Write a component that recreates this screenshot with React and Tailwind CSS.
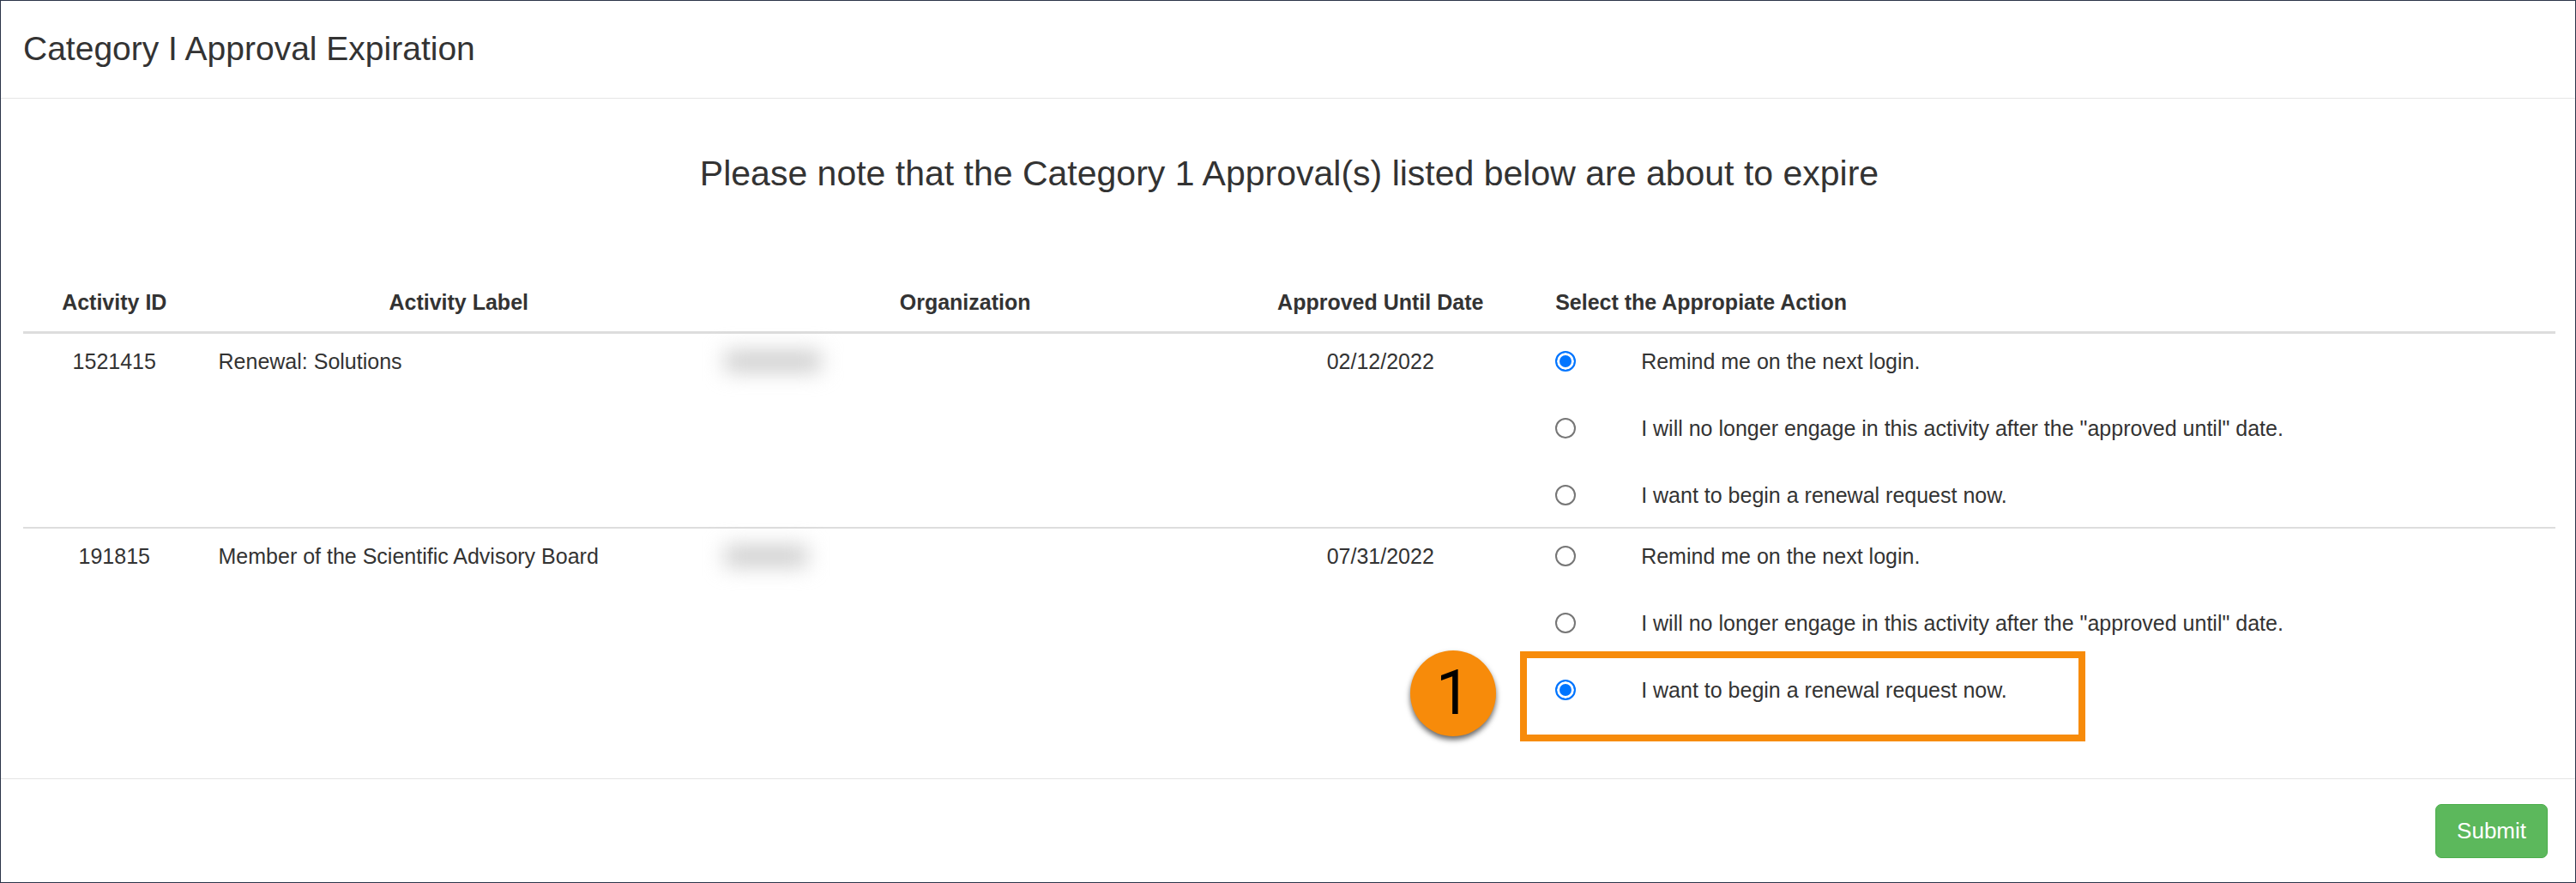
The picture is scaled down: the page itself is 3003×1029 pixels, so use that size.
import React from 'react';

const OPTIONS = [
  'Remind me on the next login.',
  'I will no longer engage in this activity after the "approved until" date.',
  'I want to begin a renewal request now.',
];

const ACTIVITIES = [
  { id: '1521415', label: 'Renewal: Solutions', until: '02/12/2022', selected: 0, mask: 'w-28' },
  { id: '191815', label: 'Member of the Scientific Advisory Board', until: '07/31/2022', selected: 2, mask: 'w-24', step: 2 },
];

function Callout() {
  return (
    <div className="pointer-events-none absolute -top-[27px] -left-[41px] h-[105px] w-[659px] border-8 border-[#f78b0a]">
      <span className="absolute -top-[9px] -left-[136px] flex size-[100px] items-center justify-center rounded-full bg-[#f78b0a] font-[Roboto,sans-serif] text-[72px] leading-none text-black shadow-[0_4px_6px_rgba(0,0,0,0.6)]">
        1
      </span>
    </div>
  );
}

function ActionOptions({ activity }) {
  return (
    <div role="radiogroup" aria-label={`Action for activity ${activity.id}`} className="flex flex-col gap-[42px]">
      {OPTIONS.map((text, i) => {
        const id = `action-${activity.id}-${i}`;
        return (
          <div key={id} className="relative flex items-center">
            <input
              type="radio"
              id={id}
              name={`action-${activity.id}`}
              defaultChecked={activity.selected === i}
              className="size-6 shrink-0 appearance-none rounded-full border-2 border-[#767676] bg-white checked:border-[#0075ff] checked:bg-[#0075ff] checked:shadow-[inset_0_0_0_3px_white]"
            />
            <label htmlFor={id} className="pl-[76px]">
              {text}
            </label>
            {activity.step === i && <Callout />}
          </div>
        );
      })}
    </div>
  );
}

export default function App() {
  return (
    <main className="border border-[#2b3549] bg-white font-['Liberation_Sans',Arial,sans-serif] text-[25px] leading-9 text-[#333]">
      <header className="border-b border-[#e5e5e5] px-[26px] pt-[27px] pb-[29px]">
        <h1 className="text-[39px] leading-[57px]">Category I Approval Expiration</h1>
      </header>

      <section className="pr-[23px] pl-[26px] pt-[57px] pb-[66px]">
        <h2 className="text-center text-[41px] leading-[60px]">
          Please note that the Category 1 Approval(s) listed below are about to expire
        </h2>

        <table className="mt-[90px] w-full table-fixed border-collapse">
          <colgroup>
            <col className="w-[7.2%]" />
            <col className="w-[20%]" />
            <col className="w-[20%]" />
            <col className="w-[12.8%]" />
            <col className="w-[40%]" />
          </colgroup>
          <thead>
            <tr className="border-b-3 border-[#ddd]">
              <th className="px-[15px] pt-[12px] pb-[16px] text-center font-bold">Activity ID</th>
              <th className="px-[15px] pt-[12px] pb-[16px] text-center font-bold">Activity Label</th>
              <th className="px-[15px] pt-[12px] pb-[16px] text-center font-bold">Organization</th>
              <th className="px-[15px] pt-[12px] pb-[16px] text-center font-bold">Approved Until Date</th>
              <th className="px-[15px] pt-[12px] pb-[16px] text-left font-bold">Select the Appropiate Action</th>
            </tr>
          </thead>
          <tbody>
            {ACTIVITIES.map((a) => (
              <tr key={a.id} className="border-b-2 border-[#ddd] align-top last:border-b-0">
                <td className="px-[15px] pt-[14px] pb-[19px] text-center">{a.id}</td>
                <td className="px-[15px] pt-[14px] pb-[19px]">{a.label}</td>
                <td className="px-[15px] pt-[14px] pb-[19px]">
                  <div className="flex h-9 items-center">
                    <span className={`${a.mask} block h-6 bg-[#cccccc] blur-[12px]`} />
                  </div>
                </td>
                <td className="px-[15px] pt-[14px] pb-[19px] text-center">{a.until}</td>
                <td className="px-[15px] pt-[14px] pb-[19px]">
                  <ActionOptions activity={a} />
                </td>
              </tr>
            ))}
          </tbody>
        </table>
      </section>

      <footer className="flex justify-end border-t border-[#e5e5e5] px-[32px] pt-[29px] pb-[28px]">
        <button
          type="button"
          className="rounded-[7px] border border-[#4cae4c] bg-[#5cb85c] px-[24px] py-[13px] text-[26px] leading-[35px] text-white"
        >
          Submit
        </button>
      </footer>
    </main>
  );
}
